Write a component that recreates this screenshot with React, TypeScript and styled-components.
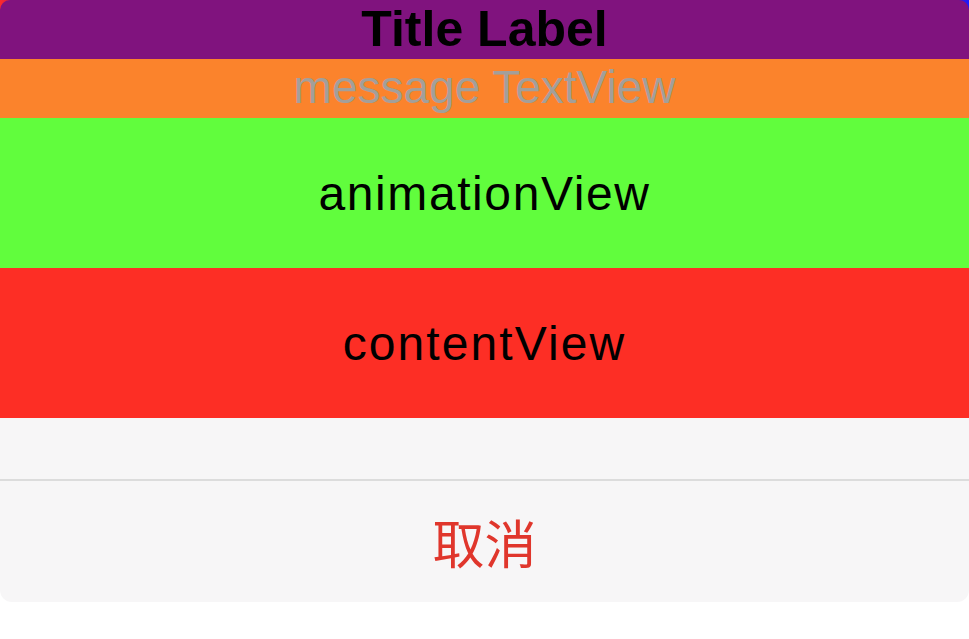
import * as React from "react";
import styled, {createGlobalStyle} from "styled-components";

const GlobalStyle = createGlobalStyle`
    html, body {
        margin: 0;
        padding: 0;
        background: #ffffff;
    }
    body {
        font-family: "Liberation Sans", Arial, sans-serif;
    }
`;

const Backdrop = styled.div`
    width: 969px;
    background: linear-gradient(90deg, #ff2a2a 0%, #7f147f 3%, #7f147f 97%, #1a1aff 100%) top / 100% 12px no-repeat;
`;

const Sheet = styled.div`
    display: flex;
    flex-direction: column;
    border-radius: 10px 10px 0 0;
    overflow: hidden;
`;

interface IBand {
    height: number,
    color: string,
}

const Band = styled.div<IBand>`
    display: flex;
    align-items: center;
    justify-content: center;
    height: ${props => props.height + "px"};
    background: ${props => props.color};
    overflow: hidden;
`;

const TitleText = styled.span`
    font-weight: bold;
    font-size: 50px;
    color: #000000;
    margin-top: -1px;
`;

const MessageText = styled.span`
    font-size: 46px;
    color: #a39f9a;
    margin-top: -4px;
`;

const ViewText = styled.span<{spacing: number}>`
    font-size: 48px;
    letter-spacing: ${props => props.spacing + "px"};
    color: #000000;
`;

const Spacer = styled.div`
    height: 61px;
    background: #f7f6f7;
`;

const Separator = styled.div`
    height: 2px;
    background: #dcdcdc;
`;

const CancelButton = styled.div`
    display: flex;
    align-items: center;
    justify-content: center;
    height: 121px;
    background: #f7f6f7;
    border-radius: 0 0 12px 12px;
    font-family: "Noto Sans CJK SC", sans-serif;
    font-size: 52px;
    color: #e0362c;
`;

export default function App() {
    return (
        <>
            <GlobalStyle/>
            <Backdrop>
                <Sheet>
                    <Band height={59} color={"#80137e"}>
                        <TitleText>Title Label</TitleText>
                    </Band>
                    <Band height={59} color={"#fb832c"}>
                        <MessageText>message TextView</MessageText>
                    </Band>
                    <Band height={150} color={"#61fd3d"}>
                        <ViewText spacing={1.6}>animationView</ViewText>
                    </Band>
                    <Band height={150} color={"#fd2e25"}>
                        <ViewText spacing={2.1}>contentView</ViewText>
                    </Band>
                    <Spacer/>
                    <Separator/>
                </Sheet>
                <CancelButton>取消</CancelButton>
            </Backdrop>
        </>
    );
}
